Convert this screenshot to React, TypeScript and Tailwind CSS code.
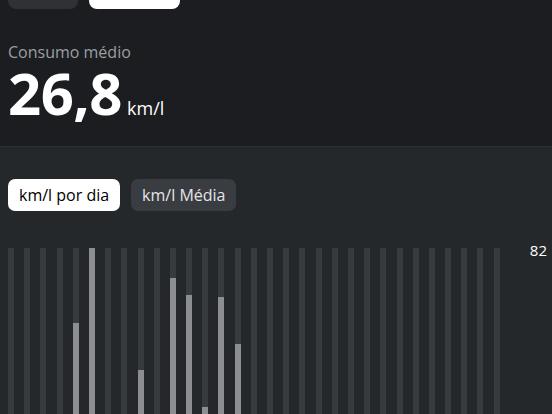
const tracks = 31;

// pixel heights of the filled bars, by column index
const values: Record<number, number> = {
  4: 125,
  5: 200,
  8: 78,
  10: 170,
  11: 153,
  12: 41,
  13: 151,
  14: 104,
};

function Chart() {
  return (
    <div className="relative mt-[37px] h-[200px]">
      <div className="ml-2 flex h-full w-[492px] justify-between">
        {Array.from({ length: tracks }).map((_, i) => {
          const v = values[i];
          return (
            <div key={i} className="relative h-full w-[6px] bg-[#383b3e]">
              {v !== undefined && (
                <div
                  className="absolute bottom-0 left-0 w-full bg-[#8d8e92]"
                  style={{ height: v }}
                />
              )}
            </div>
          );
        })}
      </div>
      <span className="absolute right-[5px] -top-[9px] text-[15px] text-white">
        82
      </span>
    </div>
  );
}

export default function App() {
  return (
    <main
      className="h-[414px] w-[552px] overflow-hidden bg-[#25282b]"
      style={{ fontFamily: '"Open Sans", sans-serif' }}
    >
      <section className="flex h-[147px] flex-col border-b border-[#2c2f32] bg-[#1b1d20] px-2">
        <div className="-mt-[27px] flex gap-[11px]">
          <div className="h-[36px] w-[70px] rounded-[8px] bg-[#2e3135]" />
          <div className="h-[36px] w-[91px] rounded-[8px] bg-white" />
        </div>
        <p className="mt-[33px] text-[16px] leading-[20px] text-[#9c9fa4]">
          Consumo médio
        </p>
        <div className="mt-[7px] flex items-baseline">
          <span className="text-[58px] font-bold leading-[48px] tracking-[-0.5px] text-white">
            26,8
          </span>
          <span className="ml-[5px] text-[18px] leading-[24px] text-white">km/l</span>
        </div>
      </section>

      <section>
        <div className="flex gap-[11px] px-2 pt-[32px]">
          <button className="h-[32px] rounded-[7px] bg-white px-[11px] text-[16px] text-black">
            km/l por dia
          </button>
          <button className="h-[32px] rounded-[7px] bg-[#393c40] px-[11px] text-[16px] text-[#e4e5e7]">
            km/l Média
          </button>
        </div>
        <Chart />
      </section>
    </main>
  );
}
